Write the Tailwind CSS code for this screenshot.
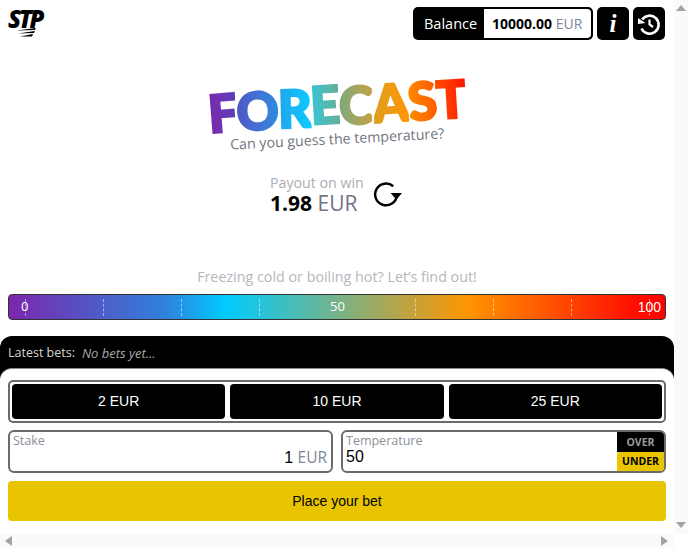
<!doctype html>
<html>
<head>
<meta charset="utf-8">
<script src="https://cdn.jsdelivr.net/npm/@tailwindcss/browser@4"></script>
</head>
<body class="bg-white overflow-hidden">
<div class="w-[688px] h-[548px] flex flex-col font-['Open_Sans',sans-serif]">
  <div class="flex h-[534px]">
    <!-- main -->
    <div class="w-[674px] flex flex-col">
      <header class="h-[47px] pt-[7px] pl-[8px] pr-[9px] flex items-start justify-between">
        <div class="relative w-[36px] h-[30px] mt-[1px]">
          <span class="block text-[24px] leading-[22px] font-extrabold italic tracking-[-2.5px] text-black">STP</span>
          <svg class="absolute left-[6px] top-[20px]" width="26" height="10" viewBox="0 0 26 10"><path d="M2 2.5 L22 0 L21 2 Z M4 5.5 L21 3 L20 5 Z M6 8.5 L19 6 L18 8.5 Z" fill="#000"/></svg>
        </div>
        <div class="flex gap-[4px]">
          <div class="flex w-[180px] h-[33px] bg-black rounded-[5px] p-[2px] text-[14px]">
            <div class="w-[69px] pl-[9px] leading-[29px] text-[14.5px] text-white">Balance</div>
            <div class="flex-1 bg-white rounded-r-[4px] pl-[8px] leading-[29px] whitespace-nowrap"><b class="font-bold text-black">10000.00</b> <span class="text-[#7d8798]">EUR</span></div>
          </div>
          <div class="w-[32px] h-[33px] bg-black rounded-[5px] flex items-center justify-center">
            <span class="font-['Liberation_Serif',serif] italic font-bold text-white text-[25px] leading-none">i</span>
          </div>
          <div class="w-[32px] h-[33px] bg-black rounded-[5px] flex items-center justify-center">
            <svg width="24" height="24" viewBox="0 0 24 24" fill="none" stroke="#fff" stroke-width="2.6"><path d="M5.2 7.6 A9 9 0 1 1 4.5 16.5"/><path d="M12.5 7.5 V12.5 L16 15" stroke-width="2.2"/><path d="M1 6.5 L8.5 11.5 L1 12.5 Z" fill="#fff" stroke="none" transform="translate(0 -0.5)"/></svg>
          </div>
        </div>
      </header>

      <div class="mt-[33px] h-[82px] flex flex-col items-center pl-[1px]">
        <h1 class="flex -rotate-[3.5deg] text-[52px] leading-[50px] font-black font-['Lato',sans-serif] tracking-[-1px] h-[50px] items-center">
          <span class="inline-block -rotate-[1deg] [-webkit-text-stroke:2.5px_transparent] bg-linear-to-r from-[#7a27ad] to-[#5b3fba] bg-clip-text text-transparent">F</span>
          <span class="inline-block [-webkit-text-stroke:2.5px_transparent] bg-linear-to-r from-[#4d56c4] to-[#2c8be0] bg-clip-text text-transparent">O</span>
          <span class="inline-block rotate-[2deg] [-webkit-text-stroke:2.5px_transparent] bg-linear-to-r from-[#1fa4ee] to-[#0ccbff] bg-clip-text text-transparent">R</span>
          <span class="inline-block -translate-y-[2px] [-webkit-text-stroke:2.5px_transparent] bg-linear-to-r from-[#2dc5d8] to-[#63b096] bg-clip-text text-transparent">E</span>
          <span class="inline-block rotate-[3deg] [-webkit-text-stroke:2.5px_transparent] bg-linear-to-r from-[#7aa97c] to-[#c3a13f] bg-clip-text text-transparent">C</span>
          <span class="inline-block [-webkit-text-stroke:2.5px_transparent] bg-linear-to-r from-[#dc9f1f] to-[#ff9500] bg-clip-text text-transparent">A</span>
          <span class="inline-block -rotate-[3deg] [-webkit-text-stroke:2.5px_transparent] bg-linear-to-r from-[#ff8a00] to-[#ff5a00] bg-clip-text text-transparent">S</span>
          <span class="inline-block [-webkit-text-stroke:2.5px_transparent] bg-linear-to-r from-[#ff4a00] to-[#ff0f00] bg-clip-text text-transparent">T</span>
        </h1>
        <p class="-mt-[1px] -rotate-[3deg] text-[14.2px] leading-[20px] text-[#6f7582] whitespace-nowrap">Can you guess the temperature?</p>
      </div>

      <div class="mt-[12px] h-[42px] flex justify-center items-start pr-[2px] gap-[11px]">
        <div class="w-[93px]">
          <div class="text-[14.2px] leading-[18px] text-[#a9adb5] whitespace-nowrap">Payout on win</div>
          <div class="text-[21px] leading-[22px] whitespace-nowrap"><b class="font-bold text-black">1.98</b> <span class="text-[#6f7582]">EUR</span></div>
        </div>
        <svg class="mt-[6px] -ml-[1px]" width="29" height="27" viewBox="0 0 28 26" fill="none"><path d="M23 15 A10.5 10.5 0 1 1 19.5 6" stroke="#000" stroke-width="2.4"/><path d="M17 12.5 L28 12.5 L22.5 19 Z" fill="#000"/></svg>
      </div>

      <p class="mt-[49px] h-[24px] text-center text-[14.3px] leading-[24px] text-[#b5b7bd]">Freezing cold or boiling hot? Let’s find out!</p>

      <div class="relative mx-[8px] mt-[5px] h-[26px] rounded-[4px] border border-[#333] bg-[linear-gradient(90deg,#7a27ad_0%,#2f82dc_24%,#00ccff_33%,#ff9500_70%,#ff1000_95%,#ff0000_100%)]">
        <div class="absolute inset-0 flex items-center justify-between pl-[16px] pr-[15px]">
          <i class="block h-[17px] border-l border-dashed border-white/50"></i>
          <i class="block h-[17px] border-l border-dashed border-white/50"></i>
          <i class="block h-[17px] border-l border-dashed border-white/50"></i>
          <i class="block h-[17px] border-l border-dashed border-white/50"></i>
          <i class="block h-[17px] border-l border-dashed border-white/0"></i>
          <i class="block h-[17px] border-l border-dashed border-white/50"></i>
          <i class="block h-[17px] border-l border-dashed border-white/50"></i>
          <i class="block h-[17px] border-l border-dashed border-white/50"></i>
          <i class="block h-[17px] border-l border-dashed border-white/50"></i>
        </div>
        <div class="absolute inset-0 flex items-center justify-between pl-[12px] pr-[4px] text-[13px] text-white">
          <span>0</span><span class="pl-[9px]">50</span><span class="font-['Liberation_Sans',sans-serif] text-[14px]">100</span>
        </div>
      </div>

      <section class="mt-[16px] flex-1 bg-black rounded-t-[12px] flex flex-col">
        <div class="h-[32px] pl-[8px] flex items-center gap-[7px] text-[12.5px] pt-[3px] text-[#d6d6d6]">
          <span>Latest bets:</span><em class="text-[13px] text-[#a8a8a8]">No bets yet...</em>
        </div>
        <div class="flex-1 bg-white rounded-t-[12px] border-t border-[#888] pt-[11px] px-[8px] font-['Liberation_Sans',sans-serif]">
          <div class="h-[43px] border-2 border-[#6b6b6b] rounded-[5px] px-[2px] flex items-center gap-[5px] text-[14px] text-white">
            <button class="flex-1 h-[35px] bg-black rounded-[4px]">2 EUR</button>
            <button class="flex-1 h-[35px] bg-black rounded-[4px]">10 EUR</button>
            <button class="flex-1 h-[35px] bg-black rounded-[4px]">25 EUR</button>
          </div>
          <div class="mt-[7px] flex gap-[8px]">
            <div class="w-[325px] h-[43px] border-2 border-[#6b6b6b] rounded-[6px] pl-[3px] pr-[4px]">
              <div class="font-['Open_Sans',sans-serif] text-[12.5px] leading-[18px] text-[#8d919b]">Stake</div>
              <div class="-mt-[2px] text-right text-[16px] leading-[18px] whitespace-nowrap">1 <span class="font-['Open_Sans',sans-serif] text-[#7d8798] text-[15.5px]">EUR</span></div>
            </div>
            <div class="w-[325px] h-[43px] border-2 border-[#6b6b6b] rounded-[6px] pl-[3px] flex overflow-hidden">
              <div class="flex-1">
                <div class="font-['Open_Sans',sans-serif] text-[12.5px] leading-[18px] text-[#8d919b]">Temperature</div>
                <div class="-mt-[2px] text-[16px] leading-[18px] text-black">50</div>
              </div>
              <div class="w-[47px] flex flex-col font-['Open_Sans',sans-serif] font-bold text-[10.5px] text-center">
                <div class="h-[20px] leading-[20px] bg-black text-[#9a9a9a]">OVER</div>
                <div class="flex-1 leading-[19px] bg-[#e8c500] text-black rounded-tl-[3px]">UNDER</div>
              </div>
            </div>
          </div>
          <button class="mt-[8px] block w-full h-[40px] rounded-[4px] bg-[#e8c500] text-[14px] text-black">Place your bet</button>
        </div>
      </section>
    </div>
    <!-- vertical scrollbar -->
    <div class="w-[14px] bg-[#fafafa] flex flex-col items-center justify-between pt-[5px] pb-[6px]">
      <svg width="10" height="6" viewBox="0 0 10 6"><path d="M5 0 L10 6 H0 Z" fill="#a3a3a3"/></svg>
      <svg width="10" height="6" viewBox="0 0 10 6"><path d="M5 6 L10 0 H0 Z" fill="#a3a3a3"/></svg>
    </div>
  </div>
  <!-- horizontal scrollbar -->
  <div class="h-[14px] flex">
    <div class="w-[674px] bg-[#fafafa] flex items-center justify-between pl-[5px] pr-[6px]">
      <svg width="7" height="10" viewBox="0 0 7 10"><path d="M0 5 L7 0 V10 Z" fill="#a3a3a3"/></svg>
      <svg width="7" height="10" viewBox="0 0 7 10"><path d="M7 5 L0 0 V10 Z" fill="#a3a3a3"/></svg>
    </div>
  </div>
</div>
</body>
</html>
